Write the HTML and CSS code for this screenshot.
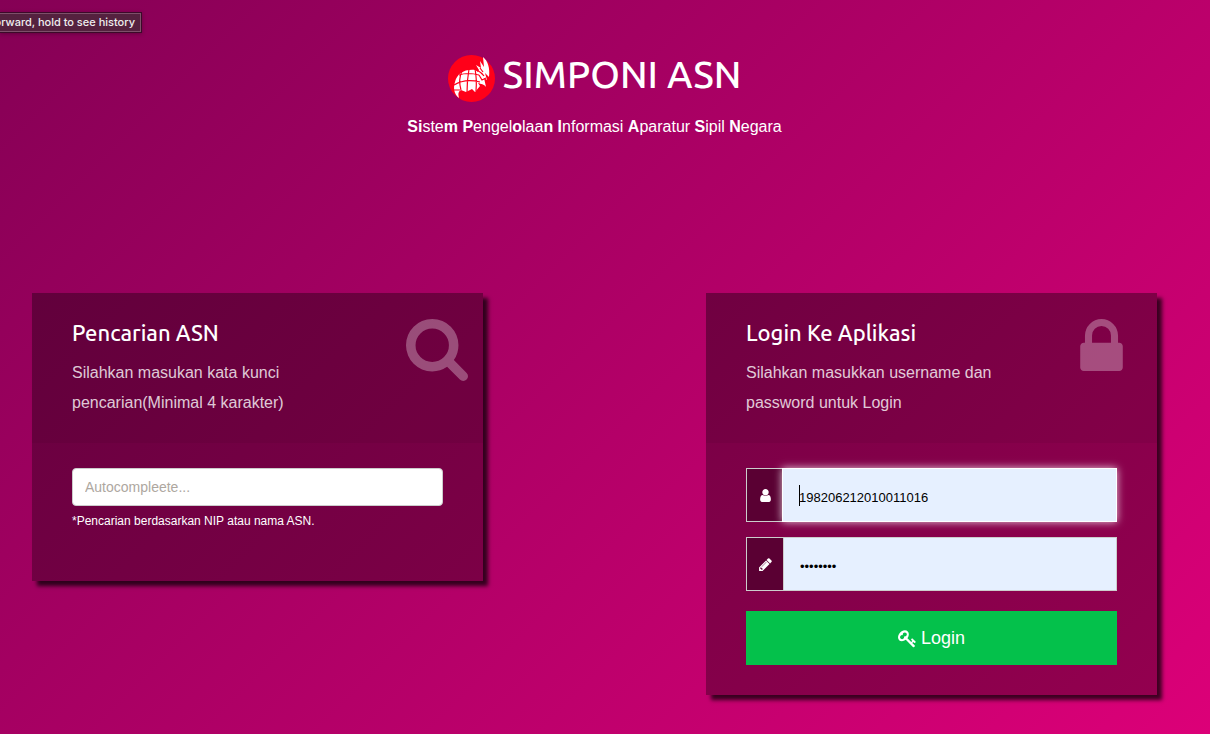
FILE: index.html
```html
<!DOCTYPE html>
<html lang="id">
<head>
<meta charset="UTF-8">
<meta name="viewport" content="width=device-width, initial-scale=1">
<title>SIMPONI ASN</title>
<link rel="stylesheet" href="styles.css">
</head>
<body>

<div class="tooltip">orward, hold to see history</div>

<header class="header">
  <h1>
    <svg class="logo" viewBox="0 0 47 47" aria-hidden="true">
      <circle cx="23.500" cy="23.500" r="23.500" fill="#ff0019"/>
      <path fill="#fff" d="M11 43C6 39 5 33 7 27C9 19 16 14 27 15L30 17L31 15L28 10L33 13L32 6L36 12L35 2C40 6 42 13 41 22L37 18L39 25L36 23L38 32C36 29 33 29 30 28L32 31L27 37L24 34L18 37L13 35Q9 37 11 43Z"/>
      <path fill="none" stroke="#ff0019" stroke-width="1.200" d="M6 30Q17 23 32 27M14 16Q10 24 13 35M21 14Q19 25 19 38M27 14Q29 24 28 36M11 20Q20 17 31 20M29 15Q34 18 36 21M6 35L12 35M31 20L34 25L38 23M32 13L35 17"/>
    </svg>
    SIMPONI ASN
  </h1>
  <p><b>Si</b>ste<b>m</b> <b>P</b>engel<b>o</b>laa<b>n</b> <b>I</b>nformasi <b>A</b>paratur <b>S</b>ipil <b>N</b>egara</p>
</header>

<main class="row">
  <section class="box">
    <div class="box-top">
      <div class="box-text">
        <h2>Pencarian ASN</h2>
        <p>Silahkan masukan kata kunci pencarian(Minimal 4 karakter)</p>
      </div>
      <svg class="icon-search" viewBox="64 128 1664 1664" aria-hidden="true"><path d="M1216 832q0-185-131.500-316.500t-316.500-131.500-316.500 131.500-131.500 316.500 131.500 316.500 316.500 131.500 316.500-131.500 131.500-316.500zm512 832q0 52-38 90t-90 38q-54 0-90-38l-343-342q-179 124-399 124-143 0-273.500-55.500t-225-150-150-225-55.500-273.500 55.500-273.500 150-225 225-150 273.500-55.500 273.500 55.500 225 150 150 225 55.500 273.500q0 220-124 399l343 343q37 37 37 90z"/></svg>
    </div>
    <div class="box-bottom search-form">
      <input type="text" class="search" placeholder="Autocompleete..." aria-label="Pencarian ASN">
      <p class="note">*Pencarian berdasarkan NIP atau nama ASN.</p>
    </div>
  </section>

  <section class="box">
    <div class="box-top">
      <div class="box-text">
        <h2>Login Ke Aplikasi</h2>
        <p>Silahkan masukkan username dan password untuk Login</p>
      </div>
      <svg class="icon-lock" viewBox="320 128 1152 1408" aria-hidden="true"><path d="M640 768h512v-192q0-106-75-181t-181-75-181 75-75 181v192zm832 96v576q0 40-28 68t-68 28h-960q-40 0-68-28t-28-68v-576q0-40 28-68t68-28h32v-192q0-184 132-316t316-132 316 132 132 316v192h32q40 0 68 28t28 68z"/></svg>
    </div>
    <form class="box-bottom login-form">
      <div class="input-group">
        <label class="addon" for="username" aria-label="Username"><svg viewBox="0 0 1792 1792"><path d="M1536 1399q0 109-62.500 187t-150.500 78h-854q-88 0-150.500-78t-62.500-187q0-85 8.500-160.500t31.500-152 58.500-131 94-89 134.500-34.500q131 128 313 128t313-128q76 0 134.500 34.500t94 89 58.500 131 31.500 152 8.500 160.500zm-256-887q0 159-112.500 271.500t-271.500 112.500-271.500-112.500-112.500-271.500 112.500-271.500 271.500-112.500 271.500 112.500 112.500 271.500z"/></svg></label>
        <input type="text" id="username" class="active" value="198206212010011016">
        <span class="caret"></span>
      </div>
      <div class="input-group">
        <label class="addon" for="password" aria-label="Password"><svg viewBox="0 0 1792 1792"><path d="M491 1536l91-91-235-235-91 91v107h128v128h107zm523-928q0-22-22-22-10 0-17 7l-542 542q-7 7-7 17 0 22 22 22 10 0 17-7l542-542q7-7 7-17zm-54-192l416 416-832 832h-416v-416zm683 96q0 53-37 90l-166 166-416-416 166-165q36-38 90-38 53 0 91 38l235 234q37 39 37 91z"/></svg></label>
        <input type="password" id="password" value="password">
      </div>
      <button type="submit" class="btn">
        <svg viewBox="0 0 1792 1792" aria-hidden="true"><path d="M832 512q0-80-56-136t-136-56-136 56-56 136q0 42 19 83-41-19-83-19-80 0-136 56t-56 136 56 136 136 56 136-56 56-136q0-42-19-83 41 19 83 19 80 0 136-56t56-136zm851 704q0 17-49 66t-66 49q-9 0-28.500-16t-36.500-33-38.500-40-24.500-26l-96 96 220 220q28 28 28 68 0 42-39 81t-81 39q-40 0-68-28l-671-671q-176 131-365 131-163 0-265.500-102.500t-102.500-265.500q0-160 95-313t248-248 313-95q163 0 265.500 102.500t102.500 265.500q0 189-131 365l355 355 96-96q-3-3-26-24.500t-40-38.500-33-36.500-16-28.500q0-17 49-66t66-49q13 0 23 10 6 6 46 44.500t82 79.500 86.500 86 73 78 28.500 41z"/></svg>
        Login
      </button>
    </form>
  </section>
</main>

</body>
</html>
```
FILE: styles.css
```css
* {
  box-sizing: border-box;
}

body {
  margin: 0;
  min-height: 100vh;
  padding: 45px 53px 39px 32px;
  background: linear-gradient(135deg, #850055, #dc0078);
  color: #fff;
  font-family: "Liberation Sans", Arial, sans-serif;
  font-size: 16px;
  line-height: 30px;
}

h1, h2, p {
  margin: 0;
}

h1, h2 {
  font-family: Ubuntu, "Noto Sans", sans-serif;
  font-weight: 500;
}

svg {
  fill: currentColor;
}

.tooltip {
  position: absolute;
  top: 12px;
  left: 0;
  padding-right: 6px;
  border: 1px solid #3b0a29;
  border-left: 0;
  box-shadow: inset -1px 0 #7d5069, inset 0 1px #7d5069, inset 0 -1px #7d5069, 0 1px 4px #00000044;
  background: #55213f;
  color: #eee;
  font-family: Inter, sans-serif;
  font-size: 11px;
  font-weight: 500;
  line-height: 19px;
  display: flex;
  justify-content: flex-end;
  width: 142px;
  white-space: nowrap;
}

.header {
  text-align: center;
  height: 248px;
}

.header h1 {
  display: flex;
  align-items: center;
  justify-content: center;
  gap: 8px;
  font-size: 38px;
  line-height: 50px;
}

.logo {
  width: 47px;
  height: 47px;
  margin-top: 10px;
}

.header p {
  margin-top: 10px;
}

.row {
  display: grid;
  grid-template-columns: 1fr 1fr;
  gap: 223px;
  align-items: start;
}

.box {
  box-shadow: 5px 5px 4px #000000b8;
  background: linear-gradient(135deg, #680040, #7c0046);
}

.box + .box {
  background: linear-gradient(135deg, #770045, #93004f);
}

.box-top {
  display: flex;
  justify-content: space-between;
  height: 150px;
  padding: 25px 15px 0 40px;
  background: #0000000d;
}

.box + .box .box-top {
  padding-right: 34px;
}

.box-text {
  width: 250px;
}

.box-text h2 {
  font-size: 22px;
  margin-bottom: 10px;
}

.box-text p {
  color: #ffffffcc;
}

.icon-search, .icon-lock {
  width: 62px;
  height: 62px;
  margin-top: 1px;
  opacity: 0.3;
}

.icon-lock {
  width: 43px;
  height: 52px;
}

.box-bottom {
  padding: 25px 40px 30px;
}

input {
  font-family: inherit;
  outline: none;
}

.search {
  display: block;
  width: 100%;
  height: 38px;
  padding: 0 12px;
  border: 1px solid #ccc;
  border-radius: 4px;
  background: #fff;
  font-size: 14px;
}

.search::placeholder {
  color: #aea79f;
}

.search-form {
  padding-bottom: 45px;
}

.note {
  font-size: 12px;
}

.input-group {
  display: flex;
  position: relative;
  height: 54px;
  margin-bottom: 15px;
}

.addon {
  display: flex;
  align-items: center;
  justify-content: center;
  width: 37px;
  border: 1px solid #ccc;
  border-right: 0;
  background: #5a0033;
}

.addon svg {
  width: 15px;
  height: 15px;
}

.input-group input {
  flex: 1;
  min-width: 0;
  padding: 4px 16px 0;
  border: 1px solid #ccc;
  background: #e6f0ff;
  color: #000;
  font-size: 13px;
}

.input-group .active {
  border-color: #fff;
  box-shadow: 0 0 8px #ffffffcc;
  margin-left: -1px;
}

.caret {
  position: absolute;
  left: 53px;
  top: 17px;
  width: 1px;
  height: 21px;
  background: #000;
}

.btn {
  display: flex;
  align-items: center;
  justify-content: center;
  gap: 4px;
  width: 100%;
  height: 54px;
  margin-top: 20px;
  border: 0;
  background: #04c14b;
  color: #fff;
  font-family: inherit;
  font-size: 18px;
  cursor: pointer;
}

.btn svg {
  width: 19px;
  height: 19px;
}
```
